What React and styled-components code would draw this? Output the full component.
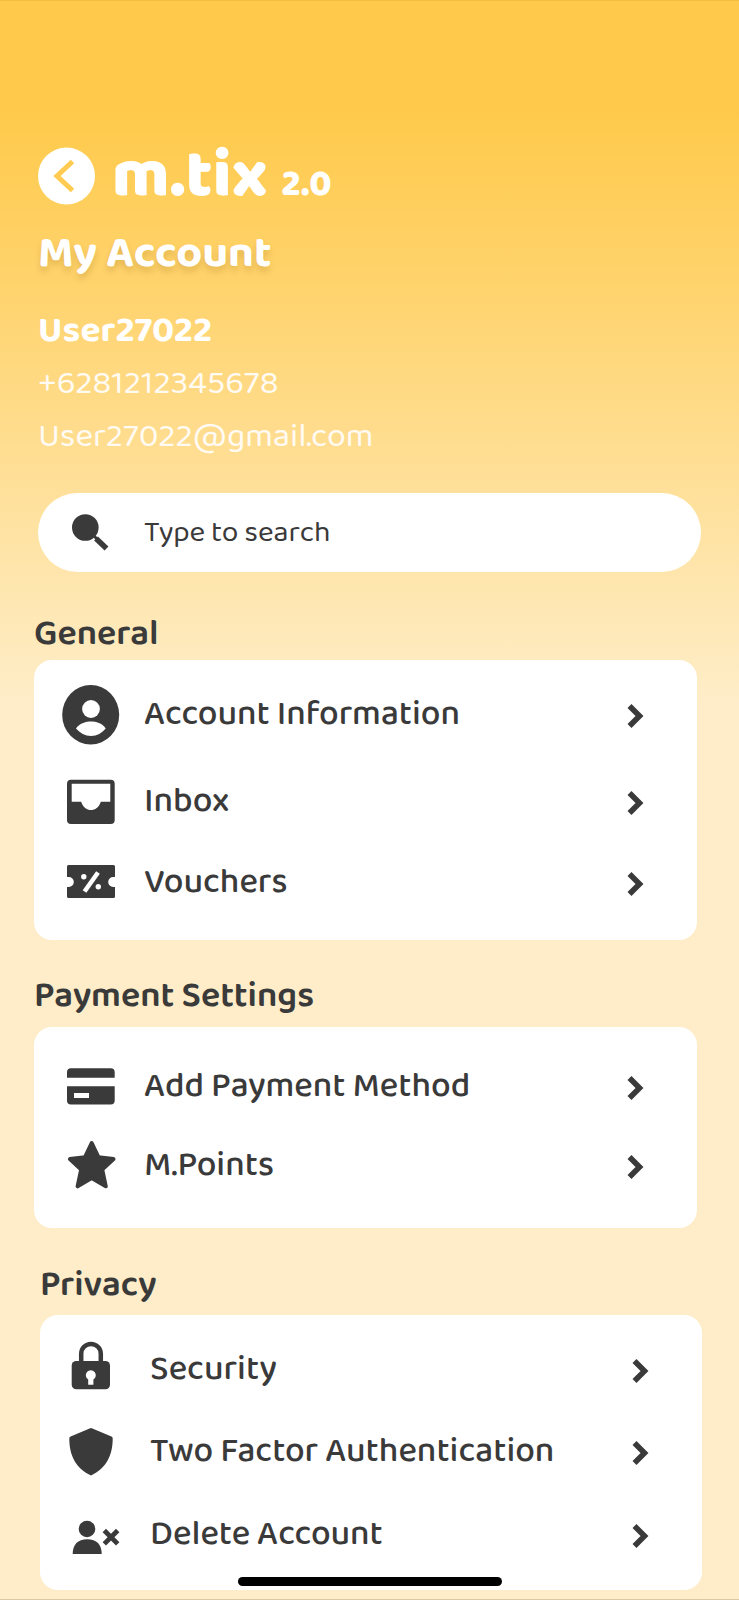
import React from "react";
import styled, { createGlobalStyle } from "styled-components";

const ink = "#3a3a3a";
const fonts = `"Baloo 2", Lato, "Noto Sans", sans-serif`;

const GlobalStyle = createGlobalStyle`
  *, *::before, *::after { box-sizing: border-box; }
  body {
    margin: 0;
    background: #feedc8;
    color: ${ink};
    font-family: ${fonts};
  }
  h1, h2, p, ul { margin: 0; padding: 0; }
`;

const Page = styled.div`
  display: flex;
  flex-direction: column;
  min-height: 100vh;
  padding: 146px 0 9px;
  border-top: 1px solid #f3bd42;
  border-bottom: 1px solid #d9c8a4;
  background: linear-gradient(#ffca4b 0, #ffca4b 110px, #ffd470 300px, #ffdf96 470px, #feedc8 700px);
`;

const Header = styled.header`
  display: flex;
  flex-direction: column;
  padding: 0 38px;
  color: #fff;
`;

const Brand = styled.div`
  display: flex;
  align-items: center;
  gap: 16px;
  height: 58px;
`;

const BackButton = styled.button`
  width: 58px;
  height: 58px;
  padding: 0;
  border: 0;
  background: none;
  cursor: pointer;
  svg { display: block; }
`;

const Logo = styled.div`
  padding-top: 10px;
  font-size: 68px;
  line-height: 60px;
  font-weight: 800;
  white-space: nowrap;
`;

const Version = styled.span`
  margin-left: 14px;
  font-size: 37px;
`;

const Title = styled.h1`
  margin-top: 25px;
  font-size: 45px;
  line-height: 48px;
  font-weight: 700;
  text-shadow: 0 5px 6px rgba(120, 80, 0, 0.2);
`;

const UserName = styled.h2`
  margin-top: 33px;
  font-size: 37px;
  line-height: 40px;
  font-weight: 700;
`;

const Contact = styled.p`
  margin-top: 13px;
  font-size: 34px;
  line-height: 40px;
  opacity: 0.9;
`;

const SearchBox = styled.label`
  display: flex;
  align-items: center;
  gap: 35px;
  height: 79px;
  margin: 36px 38px 41px;
  padding: 0 34px;
  border-radius: 40px;
  background: #fff;
  svg { flex: none; }
`;

const SearchInput = styled.input`
  flex: 1;
  min-width: 0;
  height: 40px;
  padding: 0;
  border: 0;
  outline: 0;
  background: none;
  color: ${ink};
  font: 400 30px/40px ${fonts};
  &::placeholder { color: ${ink}; opacity: 1; }
`;

const Section = styled.section`
  padding: ${(p) => (p.$inset ? "0 37px 0 40px" : "0 42px 0 34px")};
  margin-bottom: ${(p) => p.$after}px;
`;

const SectionTitle = styled.h2`
  font-size: 36px;
  line-height: 42px;
  font-weight: 600;
  margin-bottom: ${(p) => p.$gap}px;
`;

const Card = styled.ul`
  padding: ${(p) => p.$pad};
  border-radius: 18px;
  background: #fff;
  list-style: none;
`;

const Row = styled.a`
  display: flex;
  align-items: center;
  height: ${(p) => p.$height}px;
  padding: 0 53px 0 ${(p) => (p.$inset ? 21 : 27)}px;
  color: inherit;
  text-decoration: none;
  svg { flex: none; }
`;

const RowLabel = styled.span`
  flex: 1;
  padding: 0 0 2px ${(p) => (p.$inset ? 29 : 23)}px;
  font-size: 35px;
  line-height: 40px;
  font-weight: 500;
`;

const HomeBar = styled.div`
  position: fixed;
  bottom: 14px;
  left: 50%;
  width: 264px;
  height: 9px;
  margin-left: -132px;
  border-radius: 5px;
  background: #000;
`;

const shapes = {
  person: (
    <>
      <ellipse cx="29.7" cy="29.8" rx="28.5" ry="29.7" />
      <circle cx="30" cy="24" r="8.9" fill="#fff" />
      <path fill="#fff" d="M15 43.5C19 38 25 36.5 30 36.5S41 38 44.7 43.5C41 48 36 51 30 51S19 48 15 43.5z" />
    </>
  ),
  inbox: (
    <>
      <rect x="6" y="7.7" width="47.7" height="44.3" rx="4" />
      <path fill="#fff" d="M10.7 11.8h38.6v17.9H39.8C38 35.5 34 38 30 38s-8-2.5-9.8-8.3h-9.5z" />
    </>
  ),
  voucher: (
    <>
      <path d="M7.5 12h45a1.5 1.5 0 0 1 1.5 1.5V24h-1.8a5 5 0 0 0 0 10H54v9.5a1.5 1.5 0 0 1-1.5 1.5h-45A1.5 1.5 0 0 1 6 43.5V34h1.8a5 5 0 0 0 0-10H6V13.5a1.5 1.5 0 0 1 1.5-1.5z" />
      <path d="M37 19.5L23.5 38.5" stroke="#fff" strokeWidth="4.5" />
      <circle cx="22.8" cy="23.7" r="2.7" fill="#fff" />
      <circle cx="37.3" cy="33.7" r="2.7" fill="#fff" />
    </>
  ),
  card: (
    <>
      <path d="M10 11.3h39.7a4 4 0 0 1 4 4v5.4H6v-5.4a4 4 0 0 1 4-4zM6 29.3h47.7v14.2a4 4 0 0 1-4 4H10a4 4 0 0 1-4-4z" />
      <path fill="#fff" d="M13 36h15v5H13z" />
    </>
  ),
  star: (
    <path
      stroke={ink}
      strokeWidth="4"
      strokeLinejoin="round"
      d="M30.7 7l6.7 14.2 15.1 1.8-11.3 10.5 3.6 16.8-14.1-8.2-14.1 8.2 3.6-16.8L8.9 23l15.1-1.8z"
    />
  ),
  lock: (
    <>
      <rect x="10.7" y="21" width="38.3" height="28.3" rx="4.5" />
      <path d="M20.2 22V13.7a9.8 9.8 0 0 1 19.6 0V22" fill="none" stroke={ink} strokeWidth="4.5" />
      <path fill="#fff" d="M27.2 39.5a5 5 0 1 1 5.2 0v5.2h-5.2z" />
    </>
  ),
  shield: (
    <path d="M30 6q.7 0 1.4.4L50.4 14.6q1.3.6 1.3 2C51.7 33 45.5 46.500 30 53.600 14.500 46.500 8.300 33 8.300 16.600q0-1.400 1.300-2L28.600 6.400Q29.300 6 30 6z" />
  ),
  userX: (
    <>
      <circle cx="26" cy="24" r="8.3" />
      <path d="M11.7 49c0-9.5 5-14.7 14.5-14.7S40.7 39.5 40.7 49z" />
      <path d="M43.3 25.5l13.4 13.4M56.7 25.5L43.3 38.9" stroke={ink} strokeWidth="4.8" />
    </>
  ),
};

const Icon = ({ name }) => (
  <svg width="60" height="60" viewBox="0 0 60 60" fill={ink} aria-hidden="true">
    {shapes[name]}
  </svg>
);

const Chevron = () => (
  <svg width="17" height="26" viewBox="0 0 17 26" fill="none" aria-hidden="true">
    <path d="M2.5 4L12.5 14 2.5 24" stroke={ink} strokeWidth="5.6" />
  </svg>
);

const sections = [
  {
    title: "General", gap: 5, after: 35, pad: "10px 0 18px",
    rows: [
      ["person", "Account Information", 90],
      ["inbox", "Inbox", 84],
      ["voucher", "Vouchers", 78],
    ],
  },
  {
    title: "Payment Settings", gap: 10, after: 36, pad: "20px 0 23px",
    rows: [
      ["card", "Add Payment Method", 80],
      ["star", "M.Points", 78],
    ],
  },
  {
    title: "Privacy", gap: 9, after: 0, pad: "14px 0 13px", inset: true,
    rows: [
      ["lock", "Security", 82],
      ["shield", "Two Factor Authentication", 82],
      ["userX", "Delete Account", 84],
    ],
  },
];

export default function App() {
  return (
    <Page>
      <GlobalStyle />
      <Header>
        <Brand>
          <BackButton type="button" aria-label="Back">
            <svg width="58" height="58" viewBox="0 0 58 58" fill="none" aria-hidden="true">
              <circle cx="28.5" cy="29" r="28.5" fill="#fff" />
              <path d="M34.5 14.5L19 29l15.5 14.5" stroke="#ffcb50" strokeWidth="5" />
            </svg>
          </BackButton>
          <Logo>m.tix<Version>2.0</Version></Logo>
        </Brand>
        <Title>My Account</Title>
        <UserName>User27022</UserName>
        <Contact>+6281212345678</Contact>
        <Contact>User27022@gmail.com</Contact>
      </Header>
      <SearchBox>
        <svg width="37" height="37" viewBox="0 0 37 37" aria-hidden="true">
          <circle cx="13.3" cy="13.5" r="13.3" fill={ink} />
          <path d="M20 20l5 5" stroke={ink} strokeWidth="3" />
          <path d="M24 24.5l10.5 10" stroke={ink} strokeWidth="5.5" />
        </svg>
        <SearchInput type="search" placeholder="Type to search" aria-label="Search" />
      </SearchBox>
      <main>
        {sections.map((s) => (
          <Section key={s.title} $inset={s.inset} $after={s.after}>
            <SectionTitle $gap={s.gap}>{s.title}</SectionTitle>
            <Card $pad={s.pad}>
              {s.rows.map(([icon, label, height]) => (
                <li key={label}>
                  <Row href="#" $height={height} $inset={s.inset}>
                    <Icon name={icon} />
                    <RowLabel $inset={s.inset}>{label}</RowLabel>
                    <Chevron />
                  </Row>
                </li>
              ))}
            </Card>
          </Section>
        ))}
      </main>
      <HomeBar />
    </Page>
  );
}
